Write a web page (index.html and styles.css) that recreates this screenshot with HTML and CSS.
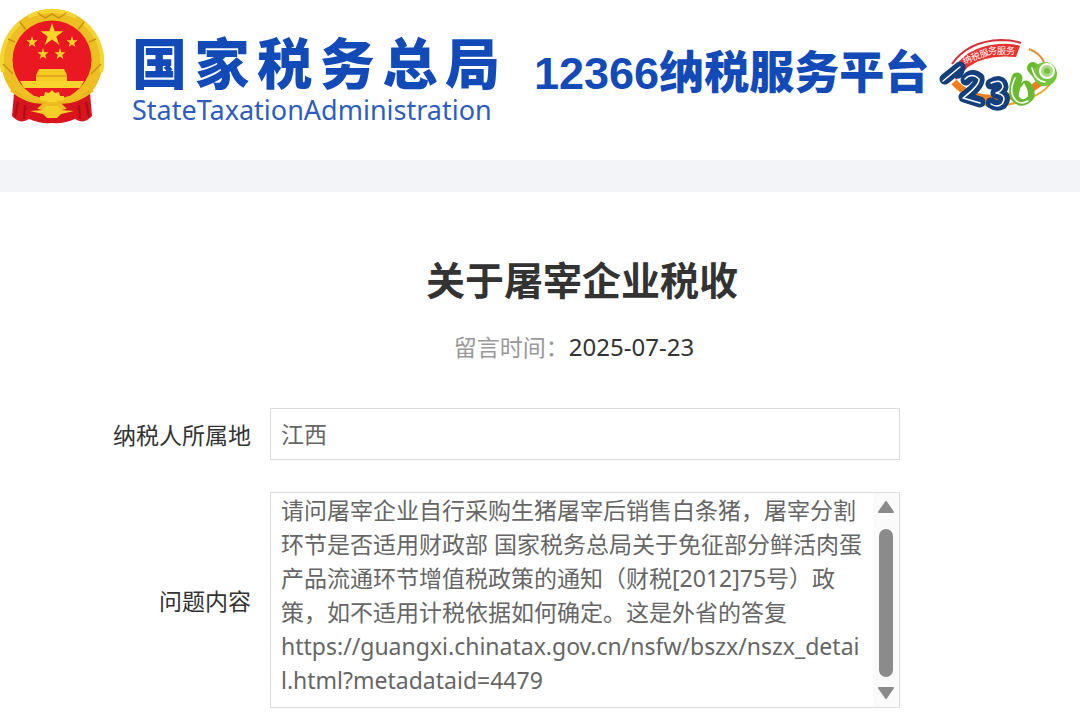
FILE: index.html
```html
<!DOCTYPE html>
<html lang="zh-CN">
<head>
    <meta charset="UTF-8">
    <meta name="viewport" content="width=device-width, initial-scale=1.0">
    <title>12366纳税服务平台</title>
    <link rel="stylesheet" href="styles.css">
</head>
<body>
    <header class="site-header">
        <svg class="emblem" viewBox="0 0 104 116" aria-hidden="true">
            <path d="M14 85 L90 85 L92 108 Q84 117 75 111 Q64 116 52 115 Q40 116 29 111 Q20 117 12 108 Z" fill="#d9141d"/>
            <circle cx="52" cy="52" r="51" fill="#eebf22"/>
            <path d="M3 64 A49 49 0 0 1 20 15 M101 64 A49 49 0 0 0 84 15 M28 9 A49 49 0 0 1 76 9" fill="none" stroke="#f5d536" stroke-width="4"/>
            <path d="M8 31 L15 34 M3 56 L13 66 M96 31 L89 34 M101 56 L91 66 M20 14 L26 22 M84 14 L78 22 M38 5 L45 10 L52 6 L59 10 L66 5" fill="none" stroke="#c9930f" stroke-width="1.500"/>
            <circle cx="52" cy="52" r="39.500" fill="#ea1822"/>
            <g fill="#fbd629">
                <path d="M52 15 L54.700 23.300 L63.400 23.300 L56.400 28.400 L59.100 36.700 L52 31.600 L44.900 36.700 L47.600 28.400 L40.600 23.300 L49.300 23.300 Z"/>
                <path d="M32 28 L33.300 32.300 L37.500 32.300 L34.200 34.900 L35.400 39 L32 36.500 L28.600 39 L29.800 34.900 L26.500 32.300 L30.700 32.300 Z"/>
                <path d="M72 28 L73.300 32.300 L77.500 32.300 L74.200 34.900 L75.400 39 L72 36.500 L68.600 39 L69.800 34.900 L66.500 32.300 L70.700 32.300 Z"/>
                <path d="M43 40 L44.300 44.300 L48.500 44.300 L45.200 46.900 L46.400 51 L43 48.500 L39.600 51 L40.800 46.900 L37.500 44.300 L41.700 44.300 Z"/>
                <path d="M60 40 L61.300 44.300 L65.500 44.300 L62.200 46.900 L63.400 51 L60 48.500 L56.600 51 L57.800 46.900 L54.500 44.300 L58.700 44.300 Z"/>
            </g>
            <path d="M39 61 H64 L67 67 V73 H36 V67 Z" fill="#f5ca22"/>
            <path d="M36 68 H67" stroke="#dc851a" stroke-width="1"/>
            <path d="M20 73 H84 L80 80 H24 Z" fill="#f8d42c"/>
            <path d="M25 80 H79 L70 88 H34 Z" fill="#ea1822"/>
            <path d="M40 92 L40 88 L44 88 L45 84 L49 85 L52 82 L55 85 L59 84 L60 88 L64 88 L64 92 L59 94 H45 Z" fill="#f7d52c"/>
            <path d="M15 83 Q28 93 43 95 L32 106 Q26 99 14 103 Z M89 83 Q76 93 61 95 L72 106 Q78 99 90 103 Z" fill="#d7131d"/>
            <path d="M11 82 Q29 96 45 94 L52 99 L59 94 Q75 96 93 82" fill="none" stroke="#edbb20" stroke-width="3"/>
            <path d="M30 103 L43 102 L46 98 H58 L61 102 L74 103 L61 106 L57 110 H47 L43 106 Z" fill="#f5cf27"/>
            <path d="M18 94 L15 109 M25 97 L24 111 M79 97 L80 111 M86 94 L89 109" stroke="#a90e16" stroke-width="2"/>
        </svg>
        <div class="brand">
            <div class="brand-name">国家税务总局</div>
            <div class="brand-en">StateTaxationAdministration</div>
        </div>
        <div class="platform">12366纳税服务平台</div>
        <svg class="hotline" viewBox="0 0 120 74" aria-hidden="true">
            <path d="M13 26 Q29 3 62 2 Q74 2 82 5" fill="none" stroke="#d62f37" stroke-width="2"/>
            <path d="M13 35 Q24 9 60 6 Q74 5 81 8 L77 19 Q46 16 29 29 L17 42 Z" fill="#ea322e"/>
            <path d="M15 44 Q31 62 58 60 Q92 57 105 40" fill="none" stroke="#f0801b" stroke-width="7"/>
            <path d="M34 64 Q60 72 86 62 Q104 56 112 45" fill="none" stroke="#f3a323" stroke-width="2"/>
            <path d="M90 11 Q101 15 105 24" fill="none" stroke="#e58c36" stroke-width="2"/>
            <text class="hotline-text" x="25" y="26" transform="rotate(-20 25 26)">纳税服</text>
            <text class="hotline-text" x="49" y="16">务服务</text>
            <g fill="none" stroke-linecap="round" stroke-linejoin="round">
                <g stroke="#143f7d" stroke-width="11">
                    <path d="M6 41 L21 29 L19 35"/>
                    <path d="M27 42 Q33 34 40 40 Q42 47 25 59 L41 64"/>
                    <path d="M52 46 Q63 40 64 49 Q63 54 57 55 Q70 57 63 66 Q58 69 52 65"/>
                </g>
                <g stroke="#fff" stroke-width="1.500">
                    <path d="M4 43 L21 29"/>
                    <path d="M26 41 Q33 34 40 41 Q41 47 24 60 L41 65"/>
                    <path d="M52 45 Q63 40 64 49 Q62 54 57 55 Q69 57 63 66 Q58 70 52 66"/>
                </g>
                <path d="M78 40 Q74 52 77 59 Q83 66 90 58 Q91 53 87 48" stroke="#69b931" stroke-width="11"/>
                <path d="M76 40 Q70 53 75 60 Q80 68 89 63" stroke="#fff" stroke-width="1.500"/>
                <path d="M94 30 L104 42" stroke="#69b931" stroke-width="12"/>
            </g>
            <path d="M85 45 Q77 56 81 60 Q86 63 89 58 Q90 53 85 45 Z" fill="#fff"/>
            <circle cx="106" cy="36" r="12" fill="#76c43b"/>
            <circle cx="108" cy="33" r="7" fill="#a9dc82" stroke="#fff" stroke-width="2"/>
            <circle cx="108" cy="33" r="3" fill="#77bf3c"/>
            <path d="M93 30 Q96 43 106 44" fill="none" stroke="#fff" stroke-width="1.500" stroke-linecap="round"/>
        </svg>
    </header>

    <main class="detail">
        <h1>关于屠宰企业税收</h1>
        <p class="meta">留言时间：<time datetime="2025-07-23">2025-07-23</time></p>

        <form class="detail-form">
            <label for="area">纳税人所属地</label>
            <input type="text" id="area" name="area" value="江西" readonly>

            <label for="content">问题内容</label>
            <div class="content-box">
                <textarea id="content" name="content" rows="6" readonly>请问屠宰企业自行采购生猪屠宰后销售白条猪，屠宰分割环节是否适用财政部 国家税务总局关于免征部分鲜活肉蛋产品流通环节增值税政策的通知（财税[2012]75号）政策，如不适用计税依据如何确定。这是外省的答复
https://guangxi.chinatax.gov.cn/nsfw/bszx/nszx_detail.html?metadataid=4479</textarea>
                <div class="scrollbar" aria-hidden="true">
                    <svg class="scroll-arrow" viewBox="0 0 16 12"><path d="M8 1 L15 11 H1 Z"/></svg>
                    <div class="scroll-thumb"></div>
                    <svg class="scroll-arrow" viewBox="0 0 16 12"><path d="M8 11 L15 1 H1 Z"/></svg>
                </div>
            </div>
        </form>
    </main>
</body>
</html>
```
FILE: styles.css
```css
* {
    box-sizing: border-box;
}
body {
    margin: 0;
    background-color: #fff;
    color: #333;
    font-family: "Noto Sans", "Noto Sans CJK SC", sans-serif;
    font-size: 23px;
}
.site-header {
    display: flex;
    align-items: flex-start;
    height: 192px;
    padding-top: 8px;
    border-bottom: 32px solid #f3f4f7;
    color: #124ab8;
    white-space: nowrap;
}
.emblem {
    flex: none;
    width: 104px;
    height: 116px;
}
.brand {
    flex: none;
    width: 368px;
    margin: 20px 0 0 28px;
}
.brand-name {
    font-family: "Noto Sans CJK SC", sans-serif;
    font-size: 55px;
    font-weight: 900;
    line-height: 64px;
    text-align-last: justify;
}
.brand-en {
    color: #2f5dbd;
    font-size: 27px;
    line-height: 36px;
}
.platform {
    flex: none;
    margin: 32px 0 0 34px;
    font-family: "Liberation Sans", "Noto Sans CJK SC", sans-serif;
    font-size: 45px;
    font-weight: 900;
    line-height: 68px;
}
.hotline {
    flex: none;
    width: 120px;
    height: 74px;
    margin: 30px 0 0 10px;
}
.hotline-text {
    fill: #fff;
    font-family: "Noto Sans CJK SC", sans-serif;
    font-size: 9px;
}
.detail {
    padding: 60px 0 12px 84px;
}
h1 {
    margin: 0;
    font-size: 39px;
    line-height: 56px;
    text-align: center;
}
.meta {
    margin: 22px 16px 0 0;
    color: #999;
    line-height: 34px;
    text-align: center;
}
.meta time {
    color: #333;
    font-size: 24px;
}
.detail-form {
    display: grid;
    grid-template-columns: 167px 1fr;
    align-items: center;
    gap: 32px 19px;
    margin: 44px 180px 0 0;
}
.detail-form label {
    text-align: right;
}
.detail-form input,
.content-box {
    width: 100%;
    border: 1px solid #dcdcdc;
    border-radius: 0;
    background-color: #fff;
}
.detail-form input,
.detail-form textarea {
    display: block;
    margin: 0;
    color: #666;
    font: inherit;
    outline: none;
}
.detail-form input {
    height: 52px;
    padding: 0 10px 2px;
}
.content-box {
    display: flex;
}
.detail-form textarea {
    flex: 1;
    min-width: 0;
    height: 214px;
    padding: 0 8px 0 10px;
    border: none;
    background: none;
    line-height: 34px;
    overflow: hidden;
    resize: none;
    word-break: break-all;
}
.scrollbar {
    display: flex;
    flex-direction: column;
    align-items: center;
    width: 26px;
    padding: 8px 0;
    background-color: #fafafa;
}
.scroll-arrow {
    flex: none;
    width: 16px;
    height: 12px;
    fill: #8b8b8b;
    stroke: #8b8b8b;
    stroke-width: 2px;
    stroke-linejoin: round;
}
.scroll-thumb {
    flex: 1;
    width: 14px;
    margin: 16px 0 10px;
    border-radius: 7px;
    background-color: #8b8b8b;
}
```
